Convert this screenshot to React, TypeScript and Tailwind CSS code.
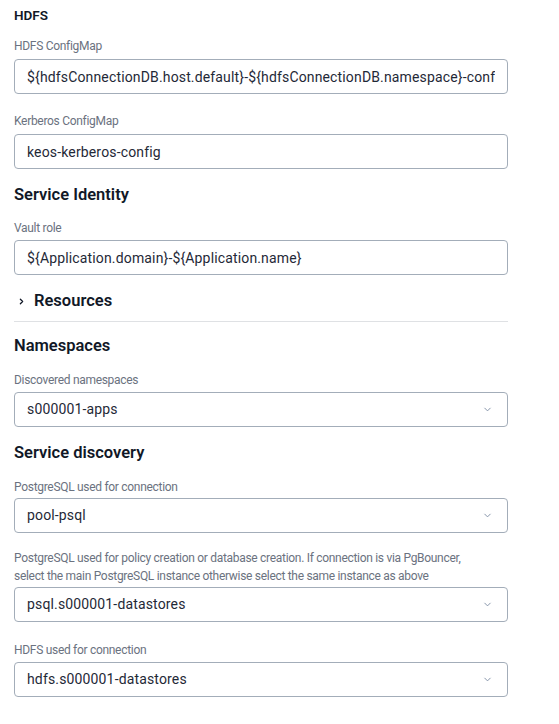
import { ChevronDown, ChevronRight } from "lucide-react";

function Label({ children, className = "" }: { children: React.ReactNode; className?: string }) {
  return (
    <p className={`text-[12px] leading-[16px] tracking-[-0.3px] text-[#6b7280] ${className}`}>{children}</p>
  );
}

function TextBox({ value }: { value: string }) {
  return (
    <div className="mt-[5px] h-[35px] w-[494px] rounded-[4px] border border-[#a3adb9] px-[12px] flex items-center">
      <div className="w-full overflow-hidden">
        <span className="text-[14px] tracking-[0.15px] text-[#1f2937] whitespace-nowrap">{value}</span>
      </div>
    </div>
  );
}

function SelectBox({ value, gap = "mt-[4px]" }: { value: string; gap?: string }) {
  return (
    <div className={`${gap} h-[35px] w-[494px] rounded-[4px] border border-[#a3adb9] pl-[12px] pr-[14px] flex items-center justify-between`}>
      <span className="text-[14px] tracking-[0.15px] text-[#1f2937] whitespace-nowrap">{value}</span>
      <ChevronDown className="w-[11px] h-[11px] text-[#7d8ca3]" strokeWidth={2} />
    </div>
  );
}

function Heading({ children, className = "" }: { children: React.ReactNode; className?: string }) {
  return (
    <h2 className={`text-[16.5px] leading-[24px] font-semibold text-[#111827] ${className}`}>{children}</h2>
  );
}

export default function App() {
  return (
    <div
      className="bg-white min-h-[724px] w-[559px] px-[14px] pt-[5px]"
      style={{ fontFamily: "Roboto, 'Liberation Sans', sans-serif" }}
    >
      <h3 className="text-[13.5px] leading-[20px] font-semibold text-[#111827]">HDFS</h3>

      <div className="mt-[13px]">
        <Label>HDFS ConfigMap</Label>
        <TextBox value="${hdfsConnectionDB.host.default}-${hdfsConnectionDB.namespace}-config" />
      </div>

      <div className="mt-[19px]">
        <Label>Kerberos ConfigMap</Label>
        <TextBox value="keos-kerberos-config" />
      </div>

      <Heading className="mt-[14px]">Service Identity</Heading>

      <div className="mt-[13px]">
        <Label>Vault role</Label>
        <div className="-mt-[1px]">
          <TextBox value="${Application.domain}-${Application.name}" />
        </div>
      </div>

      <div className="mt-[14px] flex items-center gap-[8px] pl-[3px] pb-[8px] w-[494px] border-b border-[#dfe1e4]">
        <ChevronRight className="w-[9px] h-[9px] text-[#111827]" strokeWidth={3.5} />
        <span className="text-[16.5px] leading-[24px] font-semibold text-[#111827]">Resources</span>
      </div>

      <Heading className="mt-[12px]">Namespaces</Heading>

      <div className="mt-[14px]">
        <Label>Discovered namespaces</Label>
        <SelectBox value="s000001-apps" />
      </div>

      <Heading className="mt-[14px]">Service discovery</Heading>

      <div className="mt-[14px]">
        <Label>PostgreSQL used for connection</Label>
        <SelectBox value="pool-psql" gap="mt-[3px]" />
      </div>

      <div className="mt-[16px]">
        <Label className="leading-[18px]">
          PostgreSQL used for policy creation or database creation. If connection is via PgBouncer,
          <br />
          select the main PostgreSQL instance otherwise select the same instance as above
        </Label>
        <SelectBox value="psql.s000001-datastores" gap="mt-[2px]" />
      </div>

      <div className="mt-[20px]">
        <Label>HDFS used for connection</Label>
        <SelectBox value="hdfs.s000001-datastores" />
      </div>
    </div>
  );
}
